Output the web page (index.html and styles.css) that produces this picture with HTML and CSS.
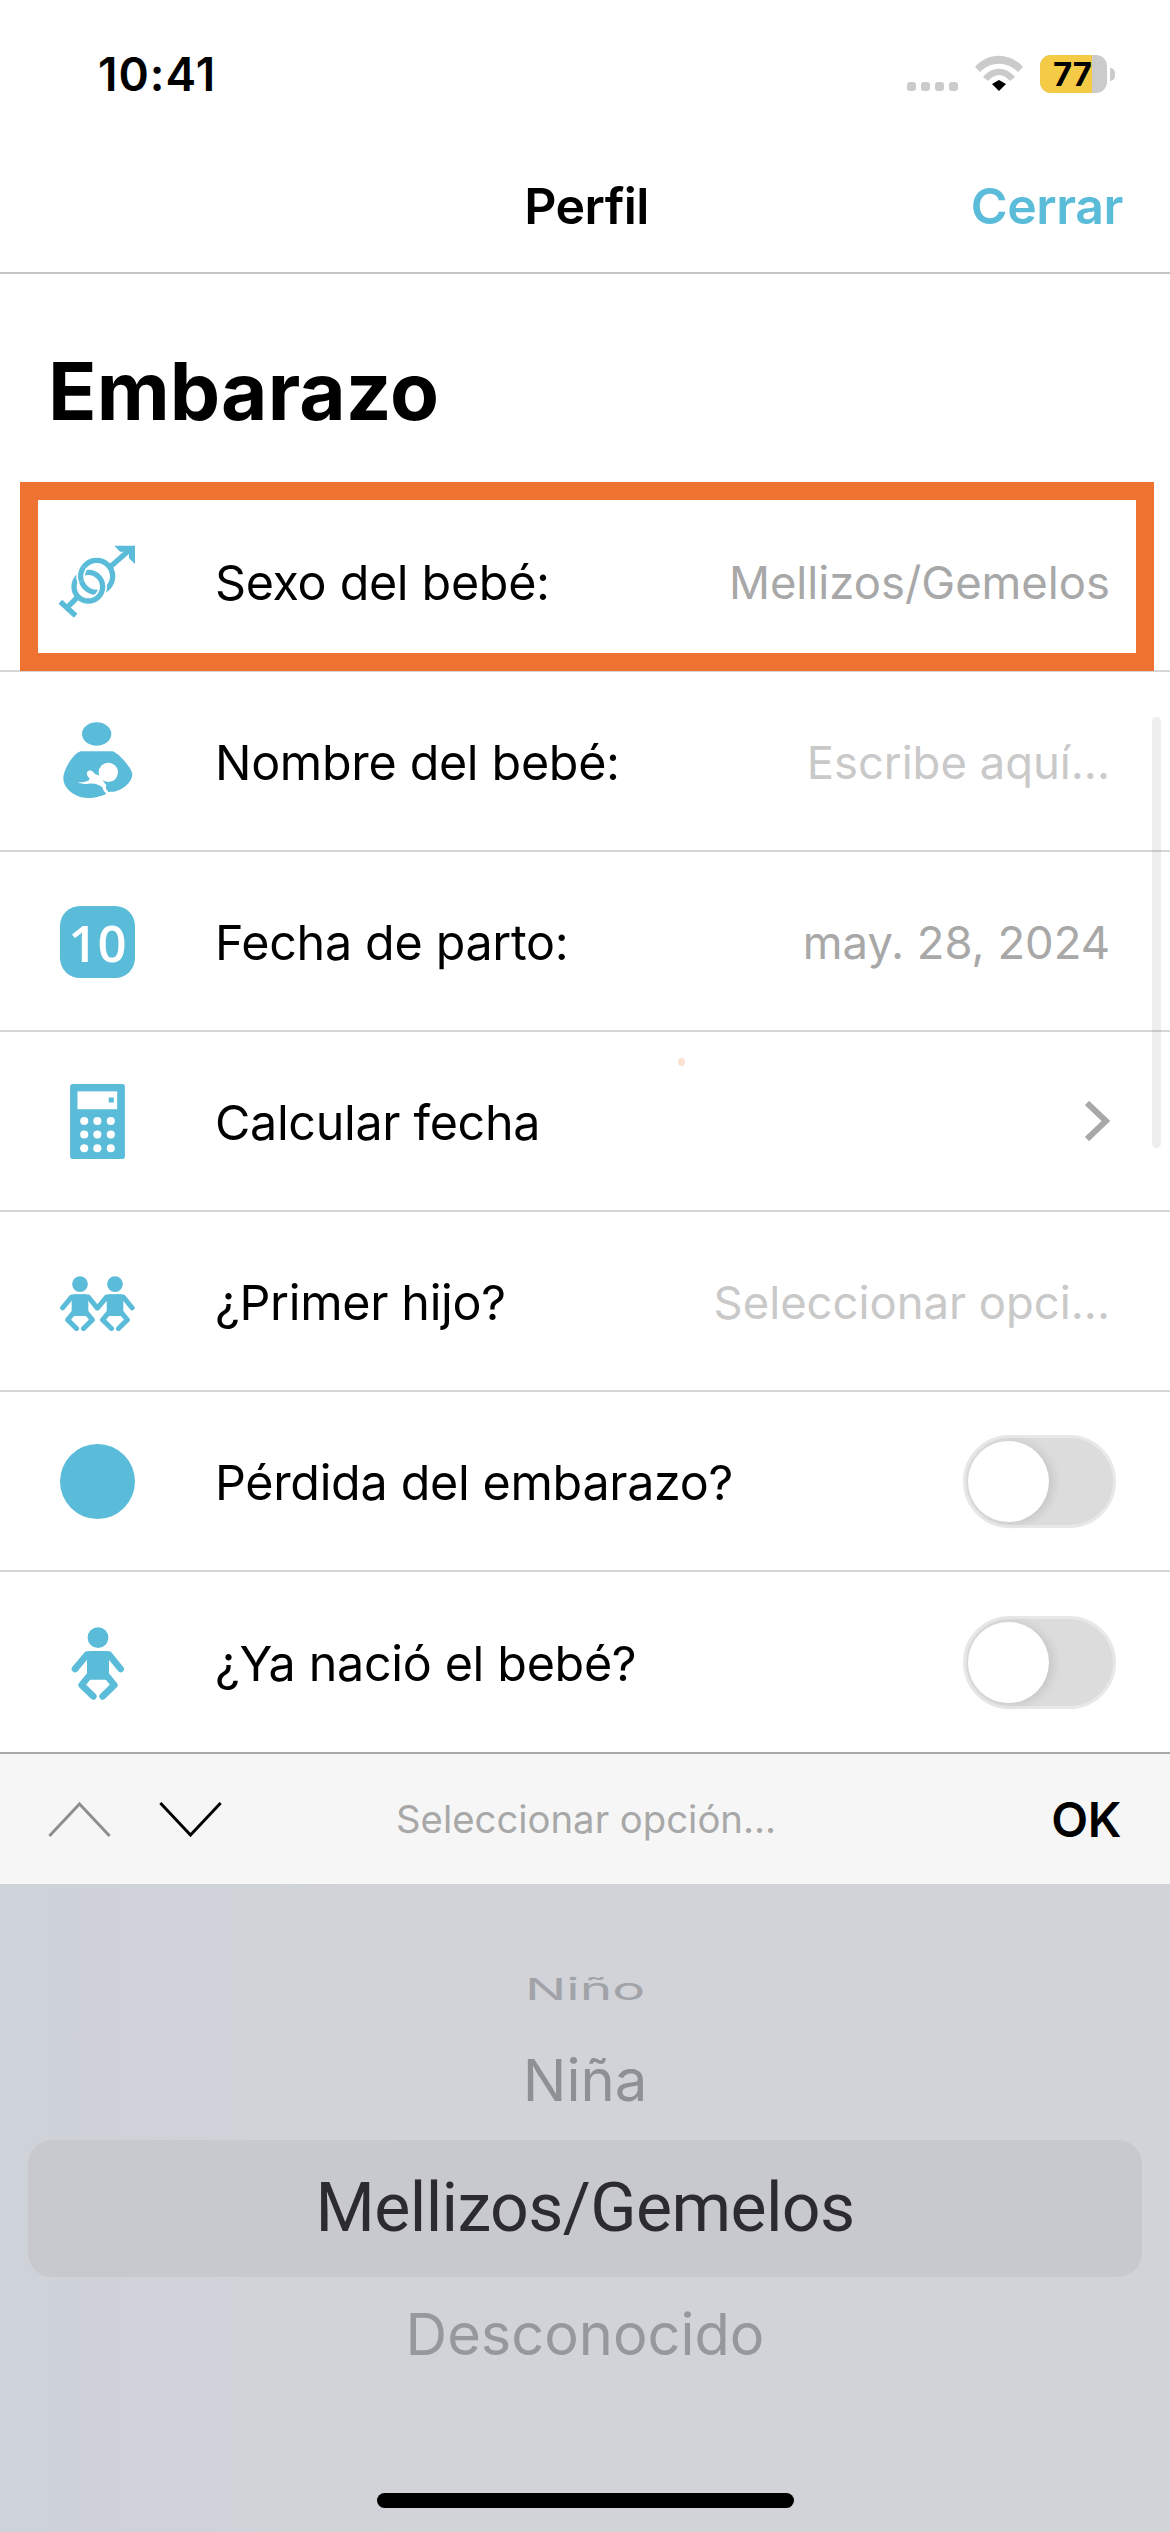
FILE: index.html
```html
<!DOCTYPE html>
<html lang="es">
<head>
<meta charset="utf-8">
<title>Perfil</title>
<link rel="stylesheet" href="styles.css">
</head>
<body>
<svg class="defs" width="0" height="0" aria-hidden="true">
  <symbol id="baby" viewBox="217 1070 156 217" overflow="visible">
    <circle cx="295" cy="1101" r="31"/>
    <rect x="262" y="1141" width="66" height="86" rx="12"/>
    <g class="baby-limb">
      <polyline points="226,1195 262,1152 328,1152 363,1195"/>
      <polyline points="268,1216 246,1243 281,1277"/>
      <polyline points="322,1216 344,1243 309,1277"/>
    </g>
  </symbol>
</svg>
<main class="page">
  <header class="status">
    <span class="time">10:41</span>
    <div class="status-icons">
      <div class="signal"><i></i><i></i><i></i><i></i></div>
      <svg class="wifi" viewBox="0 0 48 36">
        <path class="wifi-arc" d="M0 12C13 -3 35 -3 48 12L43 17C32 6 16 6 5 17Z"/>
        <path class="wifi-arc" d="M8 22C17 11 31 11 40 22L35 26C28 18 20 18 13 26Z"/>
        <path d="M24 25L31 29 24 36 17 29Z"/>
      </svg>
      <div class="battery"><div class="battery-level"><span>77</span></div></div>
      <i class="battery-cap"></i>
    </div>
  </header>
  <nav class="nav">
    <span></span>
    <span class="nav-title">Perfil</span>
    <span class="nav-close">Cerrar</span>
  </nav>
  <section class="content">
    <h1 class="title">Embarazo</h1>
    <div class="row row-marked">
      <svg class="icon icon-large" viewBox="0 0 255 255">
        <circle class="ring" cx="125" cy="112" r="48"/>
        <circle class="ring-gap" cx="100" cy="143" r="43"/>
        <circle class="ring" cx="100" cy="143" r="43"/>
        <path class="ring-gap" d="M86 84A48 48 0 0 0 79 126"/>
        <path class="ring" d="M86 84A48 48 0 0 0 79 126"/>
        <path class="ring" d="M165 84L226 31M70 172L30 212M16 188L62 230"/>
        <path d="M178 20H240V75L222 58V38H195Z"/>
      </svg>
      <span class="label">Sexo del bebé:</span>
      <span class="value">Mellizos/Gemelos</span>
    </div>
    <div class="row">
      <svg class="icon icon-large" viewBox="0 0 255 255">
        <ellipse cx="125" cy="45" rx="44" ry="35"/>
        <path d="M78 97H172C190 100 232 150 232 165C232 195 190 222 165 218C130 240 90 240 70 232C45 222 25 202 25 178C25 150 58 100 78 97Z"/>
        <circle class="cut" cx="160" cy="160" r="29"/>
        <path class="cut" d="M68 190C85 190 100 188 104 180C100 172 92 166 97 158C103 150 115 156 120 165L135 170L150 195C152 205 148 205 145 207C135 198 120 192 100 194C90 196 78 194 68 190Z"/>
        <path class="cut" d="M146 190C140 200 142 212 150 220L165 240L175 225C158 220 150 212 154 198Z"/>
      </svg>
      <span class="label">Nombre del bebé:</span>
      <span class="value value-hint">Escribe aquí...</span>
    </div>
    <div class="row">
      <div class="icon cal">10</div>
      <span class="label">Fecha de parto:</span>
      <span class="value">may. 28, 2024</span>
    </div>
    <div class="row">
      <svg class="icon icon-calc" viewBox="215 645 163 223">
        <rect x="215" y="645" width="163" height="223" rx="8"/>
        <rect class="cut" x="237" y="667" width="118" height="53"/>
        <rect x="330" y="685" width="15" height="15"/>
        <g class="cut">
          <circle cx="257" cy="755" r="12"/><circle cx="296" cy="755" r="12"/><circle cx="336" cy="755" r="12"/>
          <circle cx="257" cy="795" r="12"/><circle cx="296" cy="795" r="12"/><circle cx="336" cy="795" r="12"/>
          <circle cx="257" cy="836" r="12"/><circle cx="296" cy="836" r="12"/><circle cx="336" cy="836" r="12"/>
        </g>
      </svg>
      <span class="label">Calcular fecha</span>
      <svg class="chevron" viewBox="0 0 25 40"><path d="M2 2L21 20 2 38"/></svg>
    </div>
    <div class="row">
      <svg class="icon icon-twins" viewBox="180 20 225 165">
        <use href="#baby" x="181" y="21" width="118" height="164"/>
        <use href="#baby" x="286" y="21" width="118" height="164"/>
      </svg>
      <span class="label">¿Primer hijo?</span>
      <span class="value value-hint">Seleccionar opci...</span>
    </div>
    <div class="row">
      <div class="icon dot"></div>
      <span class="label">Pérdida del embarazo?</span>
      <div class="switch"><i></i></div>
    </div>
    <div class="row row-last">
      <svg class="icon icon-baby"><use href="#baby" width="52" height="73"/></svg>
      <span class="label">¿Ya nació el bebé?</span>
      <div class="switch"><i></i></div>
    </div>
    <div class="scrollbar"></div>
    <i class="speck"></i>
  </section>
  <div class="toolbar">
    <svg class="arrow arrow-off" viewBox="0 0 64 36"><path d="M1 35L32 2 63 35"/></svg>
    <svg class="arrow" viewBox="0 0 64 36"><path d="M1 1L32 34 63 1"/></svg>
    <span class="toolbar-hint">Seleccionar opción...</span>
    <span class="toolbar-ok">OK</span>
  </div>
  <div class="picker">
    <div class="pick pick-far">Niño</div>
    <div class="pick pick-near">Niña</div>
    <div class="pick pick-selected">Mellizos/Gemelos</div>
    <div class="pick pick-after">Desconocido</div>
    <div class="home"></div>
  </div>
</main>
</body>
</html>
```
FILE: styles.css
```css
* { box-sizing: border-box; }
html, body { margin: 0; padding: 0; background: #fff; }
.defs { position: absolute; }
.page {
  width: 1170px;
  height: 2532px;
  display: flex;
  flex-direction: column;
  overflow: hidden;
  font-family: Inter, "Noto Sans", "Liberation Sans", sans-serif;
  color: #000;
  background: #fff;
  position: relative;
}

/* status bar */
.status {
  height: 140px;
  flex: none;
  display: flex;
  justify-content: space-between;
  align-items: flex-start;
  padding: 46px 55px 0 98px;
}
.time { font-size: 46px; font-weight: 600; line-height: 56px; letter-spacing: 1px; }
.status-icons { display: flex; align-items: flex-start; padding-top: 9px; }
.signal { display: flex; gap: 5px; margin-top: 27px; margin-right: 17px; }
.signal i { width: 9px; height: 9px; border-radius: 3px; background: #cbcbcb; }
.wifi { width: 48px; height: 36px; margin-right: 17px; fill: #000; }
.wifi-arc { fill: #cbcbcb; }
.battery {
  width: 67px;
  height: 38px;
  border-radius: 11px;
  background: #cbcbcb;
  overflow: hidden;
}
.battery-level {
  width: 52px;
  height: 38px;
  background: #f5cb46;
  display: flex;
  align-items: center;
  justify-content: flex-end;
}
.battery-level span { font-size: 33px; font-weight: 700; line-height: 38px; }
.battery-cap {
  width: 5px;
  height: 13px;
  margin: 13px 0 0 3px;
  border-radius: 0 5px 5px 0;
  background: #cbcbcb;
}

/* nav */
.nav {
  height: 134px;
  flex: none;
  display: grid;
  grid-template-columns: 1fr auto 1fr;
  align-items: center;
  padding: 0 47px 0 50px;
  border-bottom: 2px solid #c4c4c4;
  font-size: 50px;
  font-weight: 600;
}
.nav-title { letter-spacing: -0.6px; }
.nav-close { text-align: right; color: #5bbcd9; letter-spacing: -0.4px; }

/* content */
.content { flex: 1; position: relative; }
.title {
  margin: 0;
  height: 218px;
  padding: 72px 0 0 48px;
  font-size: 80px;
  line-height: 90px;
  font-weight: 700;
  letter-spacing: 0.1px;
}
.row {
  height: 180px;
  display: flex;
  align-items: center;
  border-bottom: 2px solid #d6d6d6;
  padding: 0 54px 0 60px;
  position: relative;
}
.row-last { border-bottom: 0; }
.row-marked::after {
  content: "";
  position: absolute;
  left: 20px;
  right: 16px;
  top: -10px;
  bottom: -1px;
  border: 18px solid #ee7331;
}
.icon { flex: none; width: 75px; height: 75px; fill: #5bbcd9; }
.icon-large { width: 85px; height: 85px; margin: 0 -5px; }
.label { margin: 2px 0 0 80px; font-size: 48.4px; letter-spacing: -0.3px; flex: 1; white-space: nowrap; }
.value { font-size: 45.4px; color: #a8a8a8; white-space: nowrap; padding-right: 6px; margin-top: 2px; }
.value-hint { color: #c9c9c9; }
.ring { fill: none; stroke: #5bbcd9; stroke-width: 16; }
.ring-gap { fill: none; stroke: #fff; stroke-width: 26; }
.cut { fill: #fff; }
.cal {
  background: #5bbcd9;
  border-radius: 20px;
  color: #fff;
  font-size: 51px;
  font-weight: 600;
  display: flex;
  align-items: center;
  justify-content: center;
  font-family: "Open Sans", Inter, sans-serif;
  height: 72px;
  margin-top: 2px;
}
.icon-calc { height: 75px; }
.chevron { width: 25px; height: 40px; fill: none; stroke: #a8a8a8; stroke-width: 6; margin-right: 6px; }
.icon-twins { height: 55px; margin-top: 5px; }
.dot { background: #5bbcd9; border-radius: 50%; margin-top: 1px; }
.baby-limb { fill: none; stroke: #5bbcd9; stroke-width: 20; stroke-linecap: round; stroke-linejoin: round; }
#baby { fill: #5bbcd9; }
.icon-baby { width: 75px; height: 73px; padding-left: 12px; overflow: visible; margin-top: 3px; }
.switch {
  width: 153px;
  height: 93px;
  border-radius: 47px;
  background: #dcdcdc;
  border: 3px solid #e8e8e8;
  padding: 3px 0 0 2px;
  flex: none;
}
.switch i {
  display: block;
  width: 81px;
  height: 81px;
  border-radius: 50%;
  background: #fff;
  box-shadow: 4px 1px 10px rgba(0, 0, 0, 0.1);
}
.scrollbar {
  position: absolute;
  left: 1152px;
  top: 443px;
  width: 9px;
  height: 431px;
  border-radius: 5px;
  background: rgba(120, 120, 128, 0.13);
}
.speck {
  position: absolute;
  left: 678px;
  top: 784px;
  width: 7px;
  height: 8px;
  border-radius: 50%;
  background: #f9d3bd;
  opacity: 0.7;
}

/* toolbar */
.toolbar {
  height: 132px;
  flex: none;
  display: flex;
  align-items: center;
  background: #f6f6f6;
  border-top: 2px solid #a8a8a8;
  padding: 0 49px 0 48px;
  position: relative;
}
.arrow { width: 63px; height: 35px; fill: none; stroke: #000; stroke-width: 3; margin-right: 48px; flex: none; }
.arrow-off { stroke: #8e8e8e; }
.toolbar-hint {
  margin-left: 126px;
  flex: 1;
  font-size: 38.3px;
  color: #a8a8a8;
  white-space: nowrap;
}
.toolbar-ok { font-size: 48px; font-weight: 600; letter-spacing: -0.5px; }

/* picker */
.picker {
  flex: 1;
  position: relative;
  display: flex;
  flex-direction: column;
  padding: 82px 28px 0;
  background: linear-gradient(90deg, #ced2d9 0%, #d1d3d8 35%, #d1d3d8 100%);
  text-align: center;
}
.pick { white-space: nowrap; }
.pick-far { height: 46px; line-height: 46px; font-size: 55px; color: #a2a3a8; transform: scaleY(0.55); }
.pick-near { height: 128px; line-height: 128px; padding-top: 4px; font-size: 58px; color: #8f9094; }
.pick-selected { height: 137px; line-height: 137px; font-size: 68px; letter-spacing: -0.6px; font-family: Roboto, Inter, sans-serif; color: #2c2c30; background: #c8c9cf; border-radius: 24px; }
.pick-after { height: 114px; line-height: 114px; font-size: 57.7px; color: #97989c; }
.home {
  position: absolute;
  left: 377px;
  bottom: 24px;
  width: 417px;
  height: 15px;
  border-radius: 8px;
  background: #000;
}
```
